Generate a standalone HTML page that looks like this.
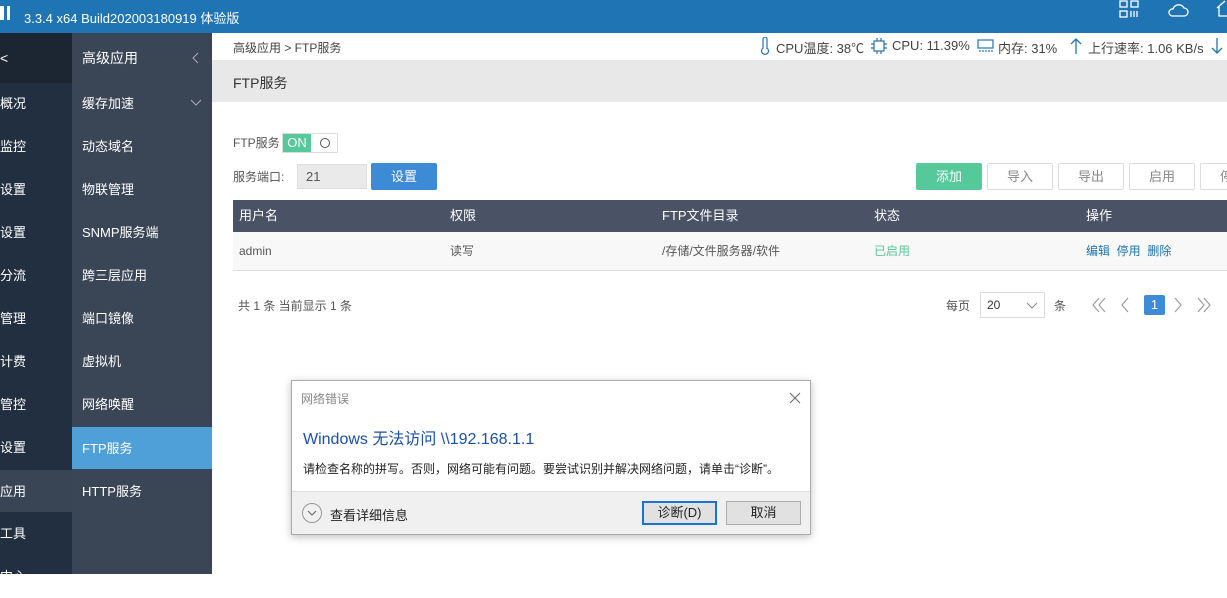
<!DOCTYPE html>
<html><head><meta charset="utf-8"><style>
*{margin:0;padding:0;box-sizing:border-box}
body{width:1227px;height:574px;overflow:hidden;position:relative;font-family:"Liberation Sans","Noto Sans CJK SC",sans-serif;font-size:13px;color:#333;background:#fff}
.abs{position:absolute}
.top{left:0;top:0;width:1227px;height:33px;background:#1f74b3;color:#fff}
.s1{left:0;top:33px;width:72px;height:541px;background:#222f40}
.s2{left:72px;top:33px;width:140px;height:541px;background:#3a4556}
.it{position:absolute;left:0;width:100%;height:43px;line-height:43px;color:#fff;font-size:13px}
.s2 .it{padding-left:10px}
.btn{position:absolute;height:27px;line-height:25px;text-align:center;border:1px solid #ddd;border-radius:2px;color:#888;background:#fff}
.col{position:absolute;top:0;line-height:32px;color:#fff}
.col2{position:absolute;line-height:39px}
.st{position:absolute;top:38px;font-size:13px;color:#444;white-space:nowrap}
</style></head><body>
<div class="abs top">
 <div class="abs" style="left:0;top:6px;width:4px;height:14px;background:#fff"></div>
 <div class="abs" style="left:7px;top:6px;width:3px;height:14px;background:#fff"></div>
 <div class="abs" style="left:24px;top:8px;font-size:13px">3.3.4 x64 Build202003180919 体验版</div>
 <svg class="abs" style="left:1119px;top:0" width="22" height="20" viewBox="0 0 22 20" fill="none" stroke="#fff" stroke-width="1.3"><rect x="1" y="1" width="7" height="6"/><rect x="12" y="1" width="7" height="6"/><rect x="1" y="11" width="7" height="6"/><path d="M12 11v6M15 11v6M18 11v6"/></svg>
 <svg class="abs" style="left:1167px;top:2px" width="22" height="16" viewBox="0 0 22 16" fill="none" stroke="#fff" stroke-width="1.3"><path d="M5 14h12a4 4 0 0 0 0-8 6 6 0 0 0-11 1 3.5 3.5 0 0 0-1 7z"/></svg>
 <svg class="abs" style="left:1216px;top:0" width="11" height="18" viewBox="0 0 11 18" fill="none" stroke="#fff" stroke-width="1.3"><path d="M1 8l8-7M3 6v10h8"/></svg>
</div>
<div class="abs s1">
 <div class="it" style="top:0;height:50px;background:#1c2633;line-height:50px;font-size:14px">&lt;</div>
 <div class="it" style="top:49px">概况</div>
 <div class="it" style="top:92px">监控</div>
 <div class="it" style="top:135px">设置</div>
 <div class="it" style="top:178px">设置</div>
 <div class="it" style="top:221px">分流</div>
 <div class="it" style="top:264px">管理</div>
 <div class="it" style="top:307px">计费</div>
 <div class="it" style="top:350px">管控</div>
 <div class="it" style="top:393px">设置</div>
 <div class="it" style="top:437px;height:42px;background:#394555">应用</div>
 <div class="it" style="top:479px">工具</div>
 <div class="it" style="top:522px">中心</div>
</div>
<div class="abs s2">
 <div class="it" style="top:0;height:50px;line-height:50px;font-size:14px">高级应用<svg style="position:absolute;right:13px;top:19px" width="7" height="12" viewBox="0 0 7 12" fill="none" stroke="#aab"><path d="M6 1L1 6l5 5"/></svg></div>
 <div class="it" style="top:49px">缓存加速<svg style="position:absolute;right:10px;top:17px" width="12" height="8" viewBox="0 0 12 8" fill="none" stroke="#aab" stroke-width="1"><path d="M1 1l5 5 5-5"/></svg></div>
 <div class="it" style="top:92px">动态域名</div>
 <div class="it" style="top:135px">物联管理</div>
 <div class="it" style="top:178px">SNMP服务端</div>
 <div class="it" style="top:221px">跨三层应用</div>
 <div class="it" style="top:264px">端口镜像</div>
 <div class="it" style="top:307px">虚拟机</div>
 <div class="it" style="top:350px">网络唤醒</div>
 <div class="it" style="top:394px;height:42px;background:#4f9fd8">FTP服务</div>
 <div class="it" style="top:437px">HTTP服务</div>
</div>
<div class="abs" style="left:233px;top:39px;font-size:12px;color:#444">高级应用 &gt; FTP服务</div>
<svg class="abs" style="left:759px;top:37px" width="12" height="18" viewBox="0 0 12 18" fill="none" stroke="#1f74b3" stroke-width="1.2"><path d="M4 2a2 2 0 0 1 4 0v9a3.5 3.5 0 1 1-4 0z"/></svg>
<div class="st" style="left:776px">CPU温度: 38℃</div>
<svg class="abs" style="left:870px;top:37px" width="18" height="18" viewBox="0 0 18 18" fill="none" stroke="#1f74b3" stroke-width="1.2"><rect x="4" y="4" width="10" height="10"/><path d="M7 1v3M11 1v3M7 14v3M11 14v3M1 7h3M1 11h3M14 7h3M14 11h3"/></svg>
<div class="st" style="left:892px">CPU: 11.39%</div>
<svg class="abs" style="left:977px;top:39px" width="17" height="14" viewBox="0 0 17 14" fill="none" stroke="#1f74b3" stroke-width="1.2"><rect x="1" y="1" width="15" height="8"/><path d="M3 11v2M6 11v2M9 11v2M12 11v2M15 11v2"/></svg>
<div class="st" style="left:998px">内存: 31%</div>
<svg class="abs" style="left:1070px;top:37px" width="12" height="18" viewBox="0 0 12 18" fill="none" stroke="#1f74b3" stroke-width="1.3"><path d="M6 17V2M1 7l5-5 5 5"/></svg>
<div class="st" style="left:1088px">上行速率: 1.06 KB/s</div>
<svg class="abs" style="left:1211px;top:37px" width="12" height="18" viewBox="0 0 12 18" fill="none" stroke="#1f74b3" stroke-width="1.3"><path d="M6 1v15M1 11l5 5 5-5"/></svg>
<div class="abs" style="left:212px;top:60px;width:1015px;height:42px;background:#e8e8e8"></div>
<div class="abs" style="left:233px;top:73px;font-size:14px">FTP服务</div>
<div class="abs" style="left:233px;top:134px;font-size:12px;color:#555">FTP服务</div>
<div class="abs" style="left:282px;top:133px;width:56px;height:20px;border:1px solid #ddd"><div style="width:28px;height:18px;background:#55c99a;color:#fff;line-height:18px;text-align:center;font-size:13px">ON</div><div style="position:absolute;left:37px;top:4px;width:10px;height:10px;border:1px solid #555;border-radius:50%"></div></div>
<div class="abs" style="left:233px;top:168px;font-size:12px;color:#555">服务端口:</div>
<div class="abs" style="left:297px;top:164px;width:70px;height:25px;background:#eaeaea;border:1px solid #ddd;padding-left:8px;line-height:23px;color:#555">21</div>
<div class="abs" style="left:371px;top:163px;width:66px;height:27px;background:#3d8ad6;color:#fff;line-height:27px;text-align:center;border-radius:2px">设置</div>
<div class="btn" style="left:916px;top:163px;width:66px;background:#55c99a;border-color:#55c99a;color:#fff">添加</div>
<div class="btn" style="left:987px;top:163px;width:66px">导入</div>
<div class="btn" style="left:1058px;top:163px;width:66px">导出</div>
<div class="btn" style="left:1129px;top:163px;width:66px">启用</div>
<div class="btn" style="left:1200px;top:163px;width:66px">停用</div>
<div class="abs" style="left:233px;top:200px;width:994px;height:32px;background:#4a5266">
 <div class="col" style="left:6px">用户名</div><div class="col" style="left:217px">权限</div><div class="col" style="left:429px">FTP文件目录</div><div class="col" style="left:641px">状态</div><div class="col" style="left:853px">操作</div>
</div>
<div class="abs" style="left:233px;top:232px;width:994px;height:39px;background:#f8f8f8;border-bottom:1px solid #ddd;font-size:12px;color:#555">
 <div class="col2" style="left:6px">admin</div><div class="col2" style="left:217px">读写</div><div class="col2" style="left:429px">/存储/文件服务器/软件</div><div class="col2" style="left:641px;color:#55c99a">已启用</div><div class="col2" style="left:853px;color:#1f74b3">编辑 &nbsp;停用 &nbsp;删除</div>
</div>
<div class="abs" style="left:238px;top:297px;font-size:12px;color:#555">共 1 条 当前显示 1 条</div>
<div class="abs" style="left:946px;top:297px;font-size:12px;color:#555">每页</div>
<div class="abs" style="left:980px;top:292px;width:65px;height:26px;border:1px solid #ddd;padding-left:6px;line-height:24px;font-size:12px">20<svg style="position:absolute;right:6px;top:9px" width="12" height="7" viewBox="0 0 12 7" fill="none" stroke="#888"><path d="M1 1l5 5 5-5"/></svg></div>
<div class="abs" style="left:1054px;top:297px;font-size:12px;color:#555">条</div>
<svg class="abs" style="left:1092px;top:297px" width="120" height="16" viewBox="0 0 120 16" fill="none" stroke="#999" stroke-width="1.1"><path d="M7 1L1 8l6 7M13 1L7 8l6 7M36 1l-6 7 6 7M83 1l6 7-6 7M106 1l6 7-6 7M112 1l6 7-6 7"/></svg>
<div class="abs" style="left:1144px;top:295px;width:21px;height:20px;background:#3d8ad6;color:#fff;text-align:center;line-height:20px;border-radius:2px">1</div>
<div class="abs" style="left:291px;top:380px;width:520px;height:155px;background:#fff;border:1px solid #aaa;box-shadow:0 2px 8px rgba(0,0,0,.25)">
 <div class="abs" style="left:9px;top:9px;font-size:12px;color:#888">网络错误</div>
 <svg class="abs" style="left:497px;top:11px" width="12" height="12" viewBox="0 0 12 12" stroke="#666" stroke-width="1"><path d="M1 1l10 10M11 1L1 11"/></svg>
 <div class="abs" style="left:11px;top:44px;font-size:16px;color:#1a4fb0">Windows 无法访问 \\192.168.1.1</div>
 <div class="abs" style="left:11px;top:79px;font-size:12px;color:#222">请检查名称的拼写。否则，网络可能有问题。要尝试识别并解决网络问题，请单击“诊断”。</div>
 <div class="abs" style="left:0;top:110px;width:518px;height:43px;background:#f0f0f0;border-top:1px solid #ddd">
  <div class="abs" style="left:10px;top:11px;width:20px;height:20px;border:1px solid #999;border-radius:50%"><svg style="position:absolute;left:4px;top:6px" width="10" height="6" viewBox="0 0 10 6" fill="none" stroke="#666"><path d="M1 1l4 4 4-4"/></svg></div>
  <div class="abs" style="left:38px;top:13px;font-size:13px;color:#222">查看详细信息</div>
  <div class="abs" style="left:350px;top:9px;width:75px;height:24px;border:2px solid #1a73d0;background:#e1e1e1;text-align:center;line-height:20px;color:#222">诊断(D)</div>
  <div class="abs" style="left:434px;top:9px;width:75px;height:24px;border:1px solid #adadad;background:#e1e1e1;text-align:center;line-height:22px;color:#222">取消</div>
 </div>
</div>
</body></html>
